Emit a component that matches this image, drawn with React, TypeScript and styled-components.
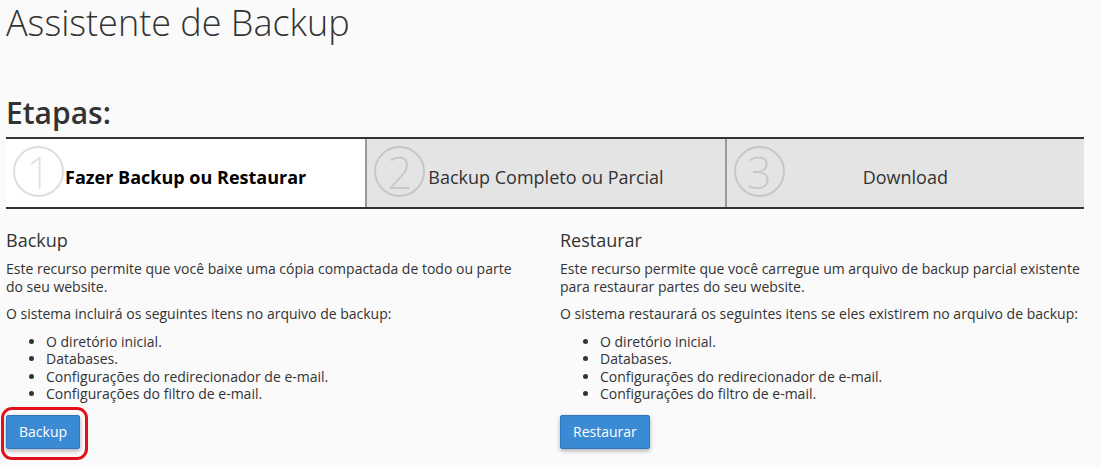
import styled, { createGlobalStyle } from "styled-components";

const GlobalStyle = createGlobalStyle`
  html, body {
    margin: 0;
    padding: 0;
    background: #fafafa;
  }
  body {
    font-family: "Open Sans", "Liberation Sans", sans-serif;
    font-size: 14px;
    color: #333;
  }
`;

const Page = styled.div`
  width: 1078px;
  padding: 0 6px 24px;
`;

const Title = styled.h1`
  margin: 0;
  padding-top: 1px;
  font-size: 36px;
  font-weight: 300;
  line-height: 44px;
  color: #333;
`;

const StepsTitle = styled.h2`
  margin: 43px 0 0;
  font-size: 30px;
  font-weight: 600;
  line-height: 49px;
  color: #333;
`;

const Steps = styled.div`
  display: grid;
  grid-template-columns: 1fr 1fr 1fr;
  border-top: 2px solid #333;
  border-bottom: 2px solid #333;
`;

const Step = styled.div<{ $active?: boolean; $first?: boolean }>`
  position: relative;
  height: 68px;
  display: flex;
  align-items: center;
  justify-content: center;
  padding-top: 8px;
  box-sizing: border-box;
  background: ${(p) => (p.$active ? "#fff" : "#e4e4e4")};
  border-left: ${(p) => (p.$first ? "none" : "2px solid #999")};
  font-size: 18px;
  font-weight: ${(p) => (p.$active ? 700 : 400)};
  color: ${(p) => (p.$active ? "#000" : "#333")};
`;

const StepNumber = styled.span`
  position: absolute;
  left: 7px;
  top: 7px;
  width: 47px;
  height: 47px;
  border: 2.5px solid rgba(0, 0, 0, 0.13);
  border-radius: 50%;
  display: flex;
  align-items: center;
  justify-content: center;
  font-size: 44px;
  font-weight: 300;
  line-height: 1;
  color: rgba(0, 0, 0, 0.13);
`;

const StepLabel = styled.span`
  position: relative;
`;

const Columns = styled.div`
  display: grid;
  grid-template-columns: 1fr 1fr;
  column-gap: 30px;
  margin-top: 21px;
`;

const Section = styled.section``;

const SectionTitle = styled.h4`
  margin: 0 0 10px;
  font-size: 18px;
  font-weight: 400;
  line-height: 20px;
  color: #333;
`;

const Text = styled.p`
  margin: 0 0 10px;
  line-height: 17.5px;
`;

const List = styled.ul`
  margin: 0 0 12px;
  padding-left: 40px;
  line-height: 17.5px;
`;

const ButtonWrap = styled.div`
  position: relative;
  display: inline-block;
`;

const Highlight = styled.span`
  position: absolute;
  left: -5px;
  right: -8px;
  top: -8px;
  bottom: -11px;
  border: 3px solid #e1101d;
  border-radius: 11px;
  pointer-events: none;
`;

const Button = styled.button`
  display: block;
  height: 34px;
  padding: 0 12px;
  font-family: "Open Sans", "Liberation Sans", sans-serif;
  font-size: 14px;
  line-height: 20px;
  color: #fff;
  background: #3a8ad4;
  border: 1px solid #2f78bf;
  border-radius: 2px;
  box-shadow: 0 2px 4px rgba(0, 0, 0, 0.3);
  cursor: pointer;
`;

const steps = [
  { n: "1", label: "Fazer Backup ou Restaurar" },
  { n: "2", label: "Backup Completo ou Parcial" },
  { n: "3", label: "Download" },
];

const items = [
  "O diretório inicial.",
  "Databases.",
  "Configurações do redirecionador de e-mail.",
  "Configurações do filtro de e-mail.",
];

export default function App() {
  return (
    <>
      <GlobalStyle />
      <Page>
        <Title>Assistente de Backup</Title>
        <StepsTitle>Etapas:</StepsTitle>
        <Steps>
          {steps.map((s, i) => (
            <Step key={s.n} $active={i === 0} $first={i === 0}>
              <StepNumber>{s.n}</StepNumber>
              <StepLabel>{s.label}</StepLabel>
            </Step>
          ))}
        </Steps>
        <Columns>
          <Section>
            <SectionTitle>Backup</SectionTitle>
            <Text>
              Este recurso permite que você baixe uma cópia compactada de todo
              ou parte do seu website.
            </Text>
            <Text>O sistema incluirá os seguintes itens no arquivo de backup:</Text>
            <List>
              {items.map((t) => (
                <li key={t}>{t}</li>
              ))}
            </List>
            <ButtonWrap>
              <Button>Backup</Button>
              <Highlight />
            </ButtonWrap>
          </Section>
          <Section>
            <SectionTitle>Restaurar</SectionTitle>
            <Text>
              Este recurso permite que você carregue um arquivo de backup parcial
              existente para restaurar partes do seu website.
            </Text>
            <Text>
              O sistema restaurará os seguintes itens se eles existirem no
              arquivo de backup:
            </Text>
            <List>
              {items.map((t) => (
                <li key={t}>{t}</li>
              ))}
            </List>
            <ButtonWrap>
              <Button>Restaurar</Button>
            </ButtonWrap>
          </Section>
        </Columns>
      </Page>
    </>
  );
}
